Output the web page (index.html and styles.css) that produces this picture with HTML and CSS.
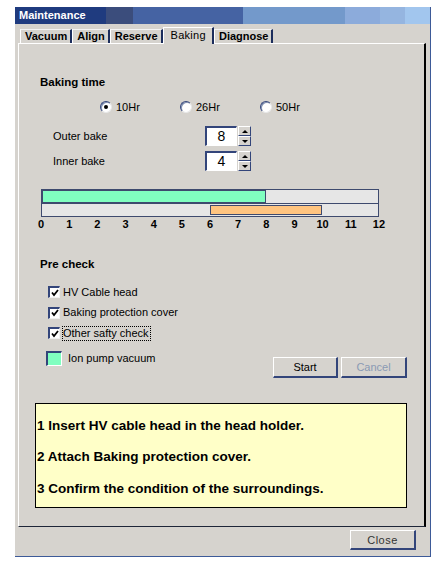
FILE: index.html
```html
<!DOCTYPE html>
<html lang="en">

<head>
    <meta charset="UTF-8">
    <title>Maintenance - Baking</title>
    <link rel="stylesheet" href="styles.css">
</head>

<body>

    <div class="window">
        <!-- Title bar -->
        <div class="titlebar">Maintenance</div>

        <!-- Tabs -->
        <div class="tabs">
            <div class="tab">Vacuum</div>
            <div class="tab">Align</div>
            <div class="tab">Reserve</div>
            <div class="tab active">Baking</div>
            <div class="tab">Diagnose</div>
        </div>

        <!-- Baking panel -->
        <div class="panel">
            <div class="content">
                <h3>Baking time</h3>

                <div class="radios">
                    <label class="radio checked"><span class="dot"></span>10Hr</label>
                    <label class="radio"><span class="dot"></span>26Hr</label>
                    <label class="radio"><span class="dot"></span>50Hr</label>
                </div>

                <div class="spin-row">
                    <span class="spin-label">Outer bake</span>
                    <span class="spin-box">8</span>
                    <span class="spin-btns">
                        <span class="spin-btn up"></span>
                        <span class="spin-btn down"></span>
                    </span>
                </div>
                <div class="spin-row">
                    <span class="spin-label">Inner bake</span>
                    <span class="spin-box">4</span>
                    <span class="spin-btns">
                        <span class="spin-btn up"></span>
                        <span class="spin-btn down"></span>
                    </span>
                </div>

                <!-- Timeline: outer 0-8h, inner 6-10h -->
                <div class="chart">
                    <div class="track">
                        <div class="bar outer" style="width: 66.667%"></div>
                    </div>
                    <div class="track">
                        <div class="bar inner" style="margin-left: 50%; width: 33.333%"></div>
                    </div>
                </div>
                <div class="axis">
                    <span>0</span><span>1</span><span>2</span><span>3</span><span>4</span>
                    <span>5</span><span>6</span><span>7</span><span>8</span><span>9</span>
                    <span>10</span><span>11</span><span>12</span>
                </div>

                <h3 class="precheck">Pre check</h3>

                <div class="check-row">
                    <span class="check"><svg width="8" height="8" viewBox="0 0 8 8"><polyline points="1,3.5 3,6 7,1" fill="none" stroke="#000" stroke-width="1.8"/></svg></span>
                    <span class="check-label">HV Cable head</span>
                </div>
                <div class="check-row">
                    <span class="check"><svg width="8" height="8" viewBox="0 0 8 8"><polyline points="1,3.5 3,6 7,1" fill="none" stroke="#000" stroke-width="1.8"/></svg></span>
                    <span class="check-label">Baking protection cover</span>
                </div>
                <div class="check-row">
                    <span class="check"><svg width="8" height="8" viewBox="0 0 8 8"><polyline points="1,3.5 3,6 7,1" fill="none" stroke="#000" stroke-width="1.8"/></svg></span>
                    <span class="check-label focus">Other safty check</span>
                </div>

                <div class="action-row">
                    <span class="lamp"></span>
                    <span class="lamp-label">Ion pump vacuum</span>
                    <div class="buttons">
                        <button class="btn">Start</button>
                        <button class="btn" disabled>Cancel</button>
                    </div>
                </div>

                <div class="notes">
                    <p>1 Insert HV cable head in the head holder.</p>
                    <p>2 Attach Baking protection cover.</p>
                    <p>3 Confirm the condition of the surroundings.</p>
                </div>
            </div>
        </div>

        <div class="footer">
            <button class="btn close-btn">Close</button>
        </div>
    </div>

</body>

</html>
```

FILE: styles.css
```css
/* Reset */
* {
    margin: 0;
    padding: 0;
    box-sizing: border-box;
}

body {
    font-family: "Liberation Sans", Arial, sans-serif;
    font-size: 11px;
    color: #000;
    background-color: #fff;
}

/* Window frame */
.window {
    margin: 7px 0 0 15px;
    width: 416px;
    height: 550px;
    background-color: #d6d3ce;
    border-right: 1px solid #3d5a98;
    border-bottom: 1px solid #3d5a98;
    display: flex;
    flex-direction: column;
}

.titlebar {
    height: 17px;
    line-height: 17px;
    padding-left: 4px;
    color: #fff;
    font-weight: bold;
    font-size: 11px;
    background: linear-gradient(to right,
            #1f3b7f 0 91px, #3b4d7c 91px 118px, #4563a3 118px 228px,
            #7399cb 228px 330px, #8cabdb 330px 365px, #95b5e0 365px 390px,
            #a2c6ee 390px);
}

/* Tabs */
.tabs {
    height: 19px;
    padding-left: 5px;
    display: flex;
    align-items: flex-end;
}

.tab {
    height: 14px;
    line-height: 13px;
    padding: 0 3px 0 4px;
    font-weight: bold;
    border-top: 1px solid #f4f4f4;
    border-left: 1px solid #fff;
    border-right: 2px solid #1c2d5c;
}

.tab.active {
    height: 17px;
    line-height: 15px;
    padding: 0 6px 0 7px;
    margin-bottom: -1px;
    font-weight: normal;
    letter-spacing: 0.3px;
    background-color: #d6d3ce;
    border-top-color: #fff;
    position: relative;
    z-index: 1;
}

/* Panel */
.panel {
    height: 484px;
    margin: 0 4px 0 3px;
    border-top: 1px solid #fff;
    border-left: 1px solid #fff;
    border-right: 2px solid #000;
    border-bottom: 1px solid #1e2638;
}

.content {
    padding: 31px 17px 0 21px;
}

.content h3 {
    font-size: 11.5px;
    line-height: 14px;
    font-weight: bold;
}

/* Radio buttons */
.radios {
    display: flex;
    margin: 11px 0 0 60px;
    height: 14px;
}

.radio {
    width: 80px;
    display: flex;
    align-items: center;
    gap: 4px;
}

.radio .dot {
    width: 12px;
    height: 12px;
    border-radius: 50%;
    background-color: #fff;
    border: 1px solid;
    border-color: #33457a #e8e8e8 #e8e8e8 #33457a;
    box-shadow: inset 1px 1px 0 #8090b0;
    display: flex;
    align-items: center;
    justify-content: center;
}

.radio.checked .dot::after {
    content: '';
    width: 4px;
    height: 4px;
    border-radius: 50%;
    background-color: #000;
}

/* Spinners */
.spin-row {
    display: flex;
    align-items: center;
    height: 20px;
    margin: 12px 0 0 13px;
}

.spin-row + .spin-row {
    margin-top: 5px;
}

.spin-label {
    width: 152px;
}

.spin-box {
    width: 32px;
    height: 20px;
    line-height: 17px;
    text-align: center;
    font-size: 14px;
    background-color: #fff;
    border-top: 2px solid #33457a;
    border-left: 2px solid #33457a;
    border-right: 1px solid #fff;
    border-bottom: 1px solid #fff;
}

.spin-btns {
    margin-left: 1px;
    display: flex;
    flex-direction: column;
}

.spin-btn {
    width: 13px;
    height: 10px;
    background-color: #d6d3ce;
    border-top: 1px solid #fff;
    border-left: 1px solid #fff;
    border-right: 1px solid #33457a;
    border-bottom: 1px solid #33457a;
    display: flex;
    align-items: center;
    justify-content: center;
}

.spin-btn::after {
    content: '';
    border-left: 3px solid transparent;
    border-right: 3px solid transparent;
}

.spin-btn.up::after {
    border-bottom: 3px solid #000;
}

.spin-btn.down::after {
    border-top: 3px solid #000;
}

/* Timeline chart */
.chart {
    width: 338px;
    margin: 18px 0 0 1px;
    border: 1px solid #3e4a6e;
    background-color: #e6e6e6;
}

.track {
    height: 13px;
    display: flex;
}

.track + .track {
    border-top: 1px solid #3e4a6e;
}

.bar {
    border: 1px solid #3e4a6e;
}

.bar.outer {
    background-color: #80ffc0;
}

.bar.inner {
    background-color: #ffc480;
    margin: 1px 0;
}

.axis {
    width: 366px;
    margin: 1px 0 0 -13px;
    display: grid;
    grid-template-columns: repeat(13, 1fr);
    text-align: center;
    font-weight: bold;
    line-height: 12px;
}

/* Pre check */
.precheck {
    margin-top: 27px;
}

.check-row {
    height: 20.5px;
    display: flex;
    align-items: center;
    margin-left: 8px;
}

.check-row:first-of-type {
    margin-top: 11px;
}

.precheck + .check-row {
    margin-top: 11px;
}

.check {
    width: 12px;
    height: 12px;
    background-color: #fff;
    border-top: 2px solid #33457a;
    border-left: 2px solid #33457a;
    border-right: 1px solid #f0f0f0;
    border-bottom: 1px solid #f0f0f0;
    display: flex;
    align-items: center;
    justify-content: center;
}

.check-label {
    margin-left: 2px;
    padding-right: 1px;
    line-height: 13px;
    border: 1px solid transparent;
}

.check-label.focus {
    border: 1px dotted #000;
}

.action-row {
    display: flex;
    align-items: flex-start;
    margin-top: 7px;
}

.lamp {
    width: 16px;
    height: 15px;
    margin-left: 6px;
    background-color: #80ffc0;
    border-top: 2px solid #33457a;
    border-left: 2px solid #33457a;
    border-right: 1px solid #fff;
    border-bottom: 1px solid #fff;
}

.lamp-label {
    margin-left: 6px;
    line-height: 15px;
}

.buttons {
    margin: 6px 0 0 auto;
    display: flex;
    gap: 3px;
}

/* Buttons */
.btn {
    width: 65px;
    height: 21px;
    font-family: "Liberation Sans", Arial, sans-serif;
    font-size: 11px;
    color: #000;
    background-color: #d6d3ce;
    border-top: 1px solid #fff;
    border-left: 1px solid #fff;
    border-right: 2px solid #33457a;
    border-bottom: 2px solid #33457a;
}

.btn:disabled {
    width: 66px;
    color: #8a9ab4;
}

/* Instructions */
.notes {
    height: 105px;
    margin: 25px 0 0 -5px;
    padding: 14px 0 0 1px;
    background-color: #ffffc8;
    border: 1px solid #000;
}

.notes p {
    font-size: 13.5px;
    font-weight: bold;
    line-height: 16px;
    margin-bottom: 15.5px;
}

/* Footer */
.footer {
    display: flex;
    justify-content: flex-end;
    padding: 3px 14px 0 0;
}

.close-btn {
    width: 66px;
    height: 20px;
    color: #333;
    letter-spacing: 0.5px;
}
```
